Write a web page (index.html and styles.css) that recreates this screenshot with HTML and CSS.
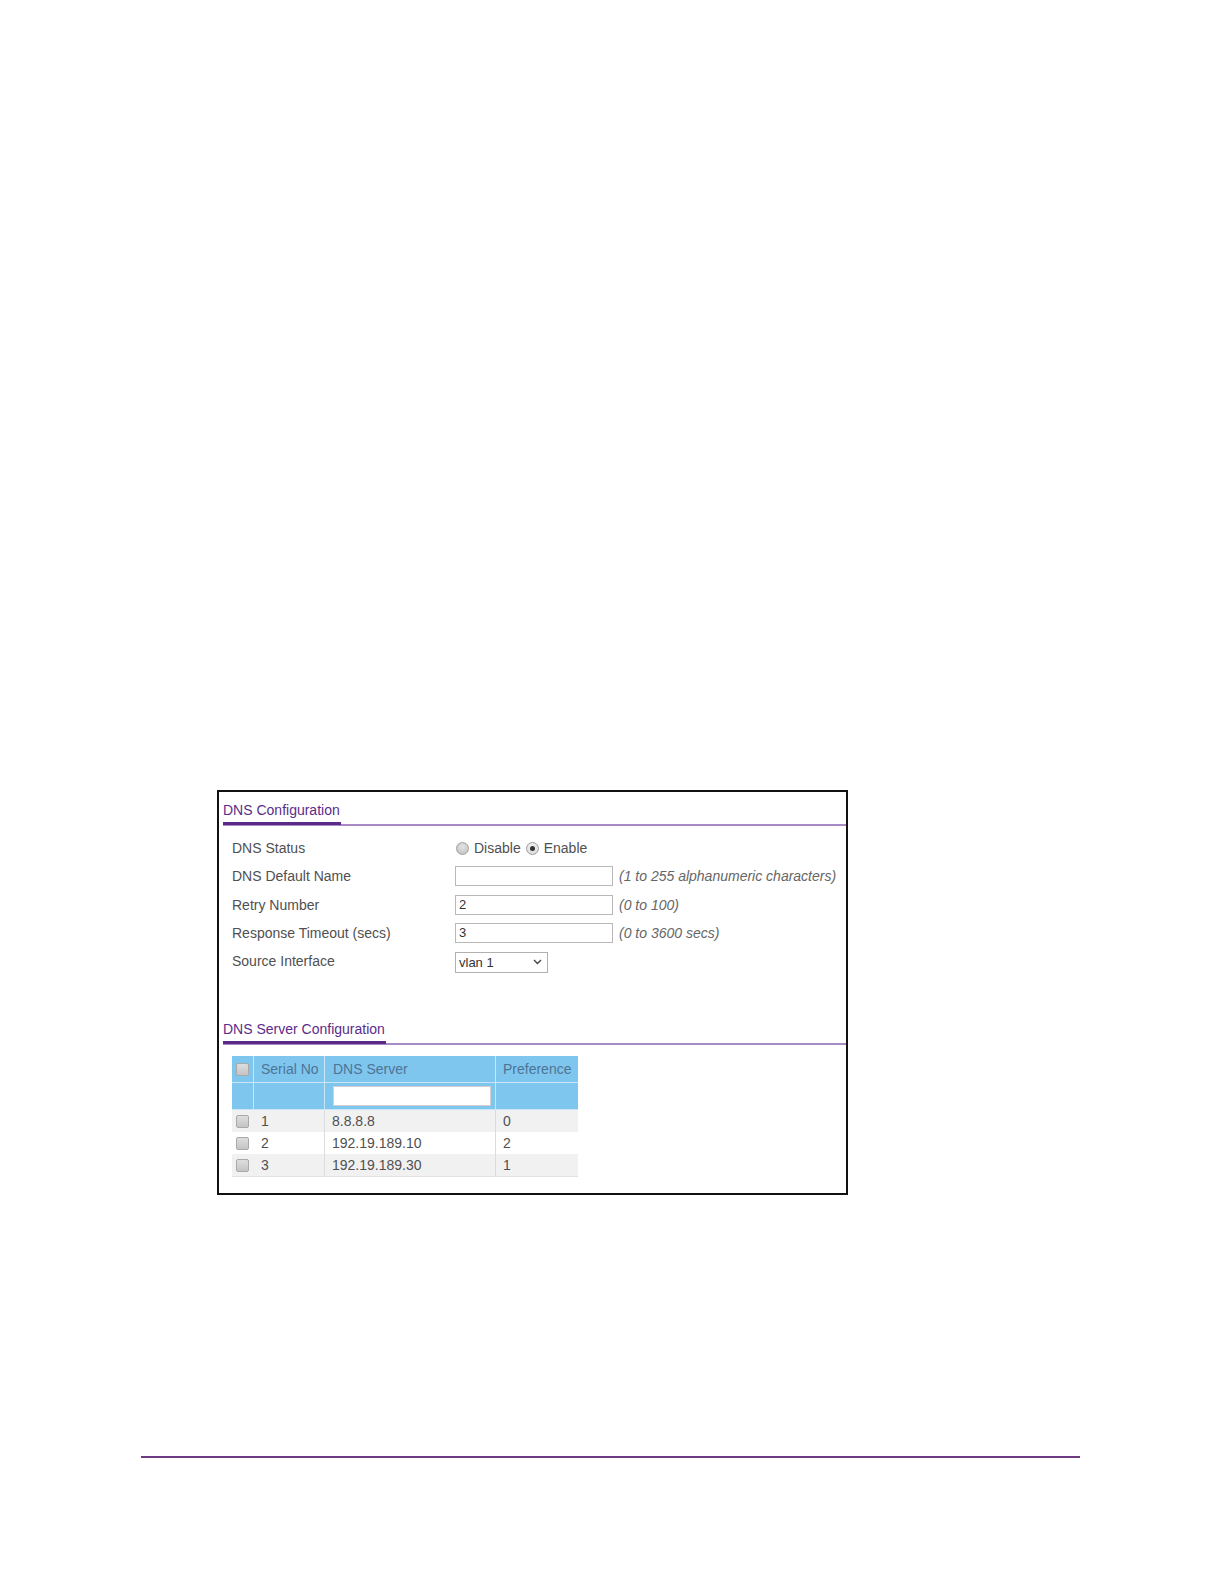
FILE: index.html
```html
<!DOCTYPE html>
<html>
<head>
<meta charset="utf-8">
<title>DNS Configuration</title>
<link rel="stylesheet" href="styles.css">
</head>
<body>
<div class="page">
  <div class="panel">
    <div class="sec-head"><span class="sec-title">DNS Configuration</span></div>
    <div class="form">
      <div class="row">
        <div class="label">DNS Status</div>
        <div class="field">
          <span class="radio"></span><span class="rlabel">Disable</span>
          <span class="radio checked"></span><span class="rlabel">Enable</span>
        </div>
      </div>
      <div class="row">
        <div class="label">DNS Default Name</div>
        <div class="field"><span class="input"></span><span class="hint">(1 to 255 alphanumeric characters)</span></div>
      </div>
      <div class="row">
        <div class="label">Retry Number</div>
        <div class="field"><span class="input">2</span><span class="hint">(0 to 100)</span></div>
      </div>
      <div class="row">
        <div class="label">Response Timeout (secs)</div>
        <div class="field"><span class="input">3</span><span class="hint">(0 to 3600 secs)</span></div>
      </div>
      <div class="row">
        <div class="label">Source Interface</div>
        <div class="field">
          <span class="select">vlan 1
            <svg class="chev" width="9" height="6" viewBox="0 0 9 6"><path d="M1 1 L4.5 4.5 L8 1" fill="none" stroke="#444" stroke-width="1.4"/></svg>
          </span>
        </div>
      </div>
    </div>

    <div class="sec-head sec2"><span class="sec-title">DNS Server Configuration</span></div>
    <div class="table">
      <div class="tr th">
        <div class="c c1"><span class="cb"></span></div>
        <div class="c c2">Serial No</div>
        <div class="c c3">DNS Server</div>
        <div class="c c4">Preference</div>
      </div>
      <div class="tr th filter">
        <div class="c c1"></div>
        <div class="c c2"></div>
        <div class="c c3"><span class="finput"></span></div>
        <div class="c c4"></div>
      </div>
      <div class="tr td odd">
        <div class="c c1"><span class="cb"></span></div>
        <div class="c c2">1</div>
        <div class="c c3">8.8.8.8</div>
        <div class="c c4">0</div>
      </div>
      <div class="tr td">
        <div class="c c1"><span class="cb"></span></div>
        <div class="c c2">2</div>
        <div class="c c3">192.19.189.10</div>
        <div class="c c4">2</div>
      </div>
      <div class="tr td odd">
        <div class="c c1"><span class="cb"></span></div>
        <div class="c c2">3</div>
        <div class="c c3">192.19.189.30</div>
        <div class="c c4">1</div>
      </div>
    </div>
  </div>
  <div class="footer-rule"></div>
</div>
</body>
</html>
```

FILE: styles.css
```css
html, body {
  margin: 0;
  padding: 0;
  background: #ffffff;
}
body {
  font-family: "Liberation Sans", Arial, sans-serif;
  color: #505050;
}
.page {
  padding-top: 790px;
  padding-bottom: 20px;
}
.panel {
  margin-left: 217px;
  width: 631px;
  height: 405px;
  box-sizing: border-box;
  border: 2px solid #111111;
  padding: 10px 0 0 4px;
}
.sec-head {
  border-bottom: 2px solid #a88bc4;
  height: 22px;
  display: flex;
  align-items: flex-start;
}
.sec-title {
  display: inline-block;
  font-size: 14px;
  line-height: 16px;
  color: #5b2c8a;
  height: 20px;
  box-sizing: content-box;
  border-bottom: 3px solid #5a2a86;
  padding-right: 1px;
}
.form {
  padding: 8px 0 0 9px;
}
.row {
  display: flex;
  align-items: center;
  height: 28.25px;
  font-size: 14px;
}
.label {
  width: 223px;
  flex: none;
}
.field {
  display: flex;
  align-items: center;
}
.radio {
  width: 11px;
  height: 11px;
  border-radius: 50%;
  border: 1px solid #a0a0a0;
  background: radial-gradient(circle at 50% 35%, #e4e4e4, #bdbdbd);
  margin: 0 5px 0 1px;
  position: relative;
  flex: none;
}
.radio.checked {
  background: radial-gradient(circle at 50% 35%, #f4f4f4, #d4d4d4);
}
.radio.checked::after {
  content: "";
  position: absolute;
  left: 3px;
  top: 3px;
  width: 5px;
  height: 5px;
  border-radius: 50%;
  background: #333333;
}
.rlabel {
  margin-right: 4px;
}
.input {
  width: 158px;
  height: 20px;
  box-sizing: border-box;
  border: 1px solid #b8b8b8;
  background: #fff;
  font-size: 13px;
  line-height: 18px;
  padding-left: 3px;
  color: #333;
}
.hint {
  margin-left: 6px;
  font-style: italic;
  color: #666666;
  font-size: 14px;
}
.select {
  width: 93px;
  height: 21px;
  box-sizing: border-box;
  border: 1px solid #b0b0b0;
  background: #fff;
  font-size: 13px;
  line-height: 19px;
  padding-left: 3px;
  color: #333;
  display: flex;
  justify-content: space-between;
  align-items: center;
  padding-right: 5px;
  margin-top: 2px;
}
.sec2 {
  margin-top: 46px;
}
.table {
  margin: 11px 0 0 9px;
  width: 346px;
  font-size: 14px;
  border-bottom: 1px solid #e2e2e2;
}
.tr {
  display: flex;
}
.c {
  box-sizing: border-box;
  display: flex;
  align-items: center;
  padding-left: 7px;
}
.c1 { width: 22px; padding-left: 4px; }
.c2 { width: 71px; }
.c3 { width: 171px; }
.c4 { width: 82px; }
.th {
  background: #7fc6ee;
  color: #4d7496;
  height: 27px;
}
.filter {
  height: 27px;
}
.th .c {
  border-right: 1px solid #c9e6f7;
  border-bottom: 1px solid #c9e6f7;
}
.th .c4 { border-right: none; }
.th .c3 { padding-left: 8px; }
.filter .c3 { padding-left: 8px; }
.finput {
  width: 158px;
  height: 20px;
  background: #fff;
  border: 1px solid #d0d0d0;
  box-sizing: border-box;
}
.td {
  height: 22px;
  background: #ffffff;
}
.td.odd {
  background: #f1f1f1;
}
.td .c {
  border-right: 1px solid #dcdcdc;
}
.td .c1 { border-right: none; }
.td .c4 { border-right: none; }
.cb {
  width: 11px;
  height: 11px;
  border: 1px solid #a9a9a9;
  border-radius: 2px;
  background: linear-gradient(#dedede, #c4c4c4);
  flex: none;
}
.footer-rule {
  margin: 261px 0 0 141px;
  width: 939px;
  height: 2px;
  background: #6e3a82;
}
```
